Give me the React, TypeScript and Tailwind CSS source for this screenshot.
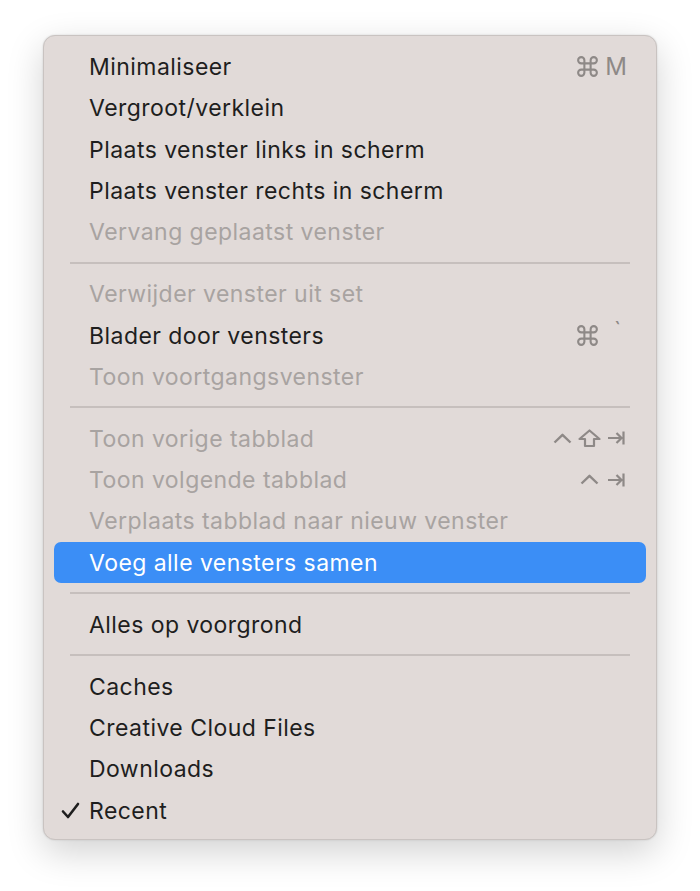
import { Command } from 'lucide-react';
import type { ReactNode } from 'react';

type Item = {
  label: string;
  disabled?: boolean;
  active?: boolean;
  checked?: boolean;
  shortcut?: ReactNode;
};

const gray = '#8e8987';

function Caret() {
  return (
    <svg width="19" height="11" viewBox="0 0 19 11" fill="none">
      <path d="M1.5 9.5 L9.5 1.8 L17.5 9.5" stroke={gray} strokeWidth="2.4" strokeLinejoin="round" />
    </svg>
  );
}

function Shift() {
  return (
    <svg width="23" height="19" viewBox="0 0 23 19" fill="none">
      <path
        d="M11.5 1.5 L21.5 10 H16 V17 H7 V10 H1.5 Z"
        stroke={gray}
        strokeWidth="2.2"
        strokeLinejoin="round"
      />
    </svg>
  );
}

function Tab() {
  return (
    <svg width="18" height="16" viewBox="0 0 18 16" fill="none">
      <path d="M1 8 H14.5 M9.5 3 L14.5 8 L9.5 13 M16.5 1.5 V14.5" stroke={gray} strokeWidth="2.2" />
    </svg>
  );
}

const cmdM = (
  <span className="flex items-center gap-[5px]" style={{ color: gray }}>
    <Command size={25} strokeWidth={2} />
    <span className="text-[24px] leading-none">M</span>
  </span>
);

const cmdTick = (
  <span className="flex items-center gap-[14px] pr-[6px]" style={{ color: gray }}>
    <Command size={25} strokeWidth={2} />
    <span className="-mt-[10px] text-[22px] leading-none">`</span>
  </span>
);

const ctrlShiftTab = (
  <span className="flex items-center gap-[6px] pr-[2px]">
    <Caret />
    <Shift />
    <Tab />
  </span>
);

const ctrlTab = (
  <span className="flex items-center gap-[8px] pr-[2px]">
    <Caret />
    <Tab />
  </span>
);

const groups: Item[][] = [
  [
    { label: 'Minimaliseer', shortcut: cmdM },
    { label: 'Vergroot/verklein' },
    { label: 'Plaats venster links in scherm' },
    { label: 'Plaats venster rechts in scherm' },
    { label: 'Vervang geplaatst venster', disabled: true },
  ],
  [
    { label: 'Verwijder venster uit set', disabled: true },
    { label: 'Blader door vensters', shortcut: cmdTick },
    { label: 'Toon voortgangsvenster', disabled: true },
  ],
  [
    { label: 'Toon vorige tabblad', disabled: true, shortcut: ctrlShiftTab },
    { label: 'Toon volgende tabblad', disabled: true, shortcut: ctrlTab },
    { label: 'Verplaats tabblad naar nieuw venster', disabled: true },
    { label: 'Voeg alle vensters samen', active: true },
  ],
  [{ label: 'Alles op voorgrond' }],
  [
    { label: 'Caches' },
    { label: 'Creative Cloud Files' },
    { label: 'Downloads' },
    { label: 'Recent', checked: true },
  ],
];

function MenuRow({ item }: { item: Item }) {
  const color = item.active
    ? 'bg-[#3b8ef6] text-white'
    : item.disabled
      ? 'text-[#a8a3a1]'
      : 'text-[#1e1e1e]';
  return (
    <div
      className={`relative mx-[10px] flex h-[41.3px] items-center justify-between rounded-[7px] pl-[35px] pr-[19px] ${color}`}
    >
      {item.checked && (
        <svg
          className="absolute left-[7px] top-[12px]"
          width="19"
          height="18"
          viewBox="0 0 19 18"
          fill="none"
        >
          <path
            d="M2 9.5 L7 15 L17 2"
            stroke="#1e1e1e"
            strokeWidth="2.6"
            strokeLinecap="round"
            strokeLinejoin="round"
          />
        </svg>
      )}
      <span className="pt-[2px] text-[23px] leading-none tracking-[0.45px]">{item.label}</span>
      {item.shortcut}
    </div>
  );
}

export default function App() {
  return (
    <div
      className="min-h-[891px] w-[700px] bg-white pl-[43px] pt-[35px]"
      style={{ fontFamily: 'Inter, "Liberation Sans", sans-serif' }}
    >
      <div className="w-[614px] rounded-[12px] border border-[#c9c3c1] bg-[#e1dad8] pb-[8px] pt-[10px] shadow-[0_12px_36px_rgba(0,0,0,0.18),0_0_2px_rgba(0,0,0,0.15)]">
        {groups.map((group, gi) => (
          <div key={gi}>
            {gi > 0 && (
              <div className="flex h-[20.7px] items-center px-[26px]">
                <div className="h-[2px] w-full bg-[#c6bfbd]" />
              </div>
            )}
            {group.map((item) => (
              <MenuRow key={item.label} item={item} />
            ))}
          </div>
        ))}
      </div>
    </div>
  );
}
